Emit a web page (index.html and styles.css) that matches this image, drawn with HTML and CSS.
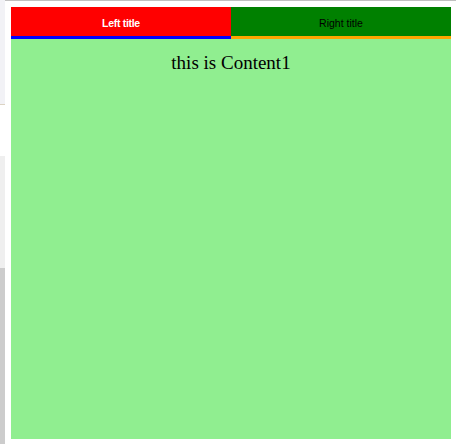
FILE: index.html
```html
<!DOCTYPE html>
<html>
<head>
<meta charset="utf-8">
<link rel="stylesheet" href="styles.css">
</head>
<body>
<div class="page">
  <div class="side">
    <div class="side-a"></div>
    <div class="side-b"></div>
    <div class="side-c"></div>
    <div class="side-d"></div>
  </div>
  <div class="main">
    <div class="tabs">
      <div class="tab tab-left">Left title</div>
      <div class="tab tab-right">Right title</div>
    </div>
    <div class="content">this is Content1</div>
  </div>
</div>
</body>
</html>
```
FILE: styles.css
```css
html, body {
  margin: 0;
  padding: 0;
  background: #ffffff;
}
.page {
  display: flex;
  width: 456px;
  height: 444px;
  overflow: hidden;
}
.side {
  width: 5px;
  display: flex;
  flex-direction: column;
  flex-shrink: 0;
}
.side-a {
  height: 104px;
  background: #f2f2f6;
  border-bottom: 1px solid #dcd3c3;
}
.side-b {
  height: 51px;
  background: #ffffff;
}
.side-c {
  height: 112px;
  background: #efefef;
}
.side-d {
  flex: 1;
  background: #cccccc;
}
.main {
  flex: 1;
  border-top: 1px solid #c0c0c0;
  padding: 6px 0 0 6px;
}
.tabs {
  display: flex;
  width: 440px;
}
.tab {
  width: 220px;
  height: 25px;
  padding-top: 4px;
  line-height: 25px;
  text-align: center;
  font-family: "Liberation Sans", Arial, sans-serif;
  font-size: 10.5px;
}
.tab-left {
  background: #ff0000;
  color: #ffffff;
  font-weight: bold;
  letter-spacing: -0.3px;
  border-bottom: 3px solid #0000ff;
}
.tab-right {
  background: #008000;
  color: #000000;
  border-bottom: 3px solid #ffa500;
}
.content {
  width: 440px;
  height: 387px;
  padding-top: 13px;
  background: #90ee90;
  text-align: center;
  font-family: "Liberation Serif", "Times New Roman", serif;
  font-size: 19px;
  color: #000000;
}
```
